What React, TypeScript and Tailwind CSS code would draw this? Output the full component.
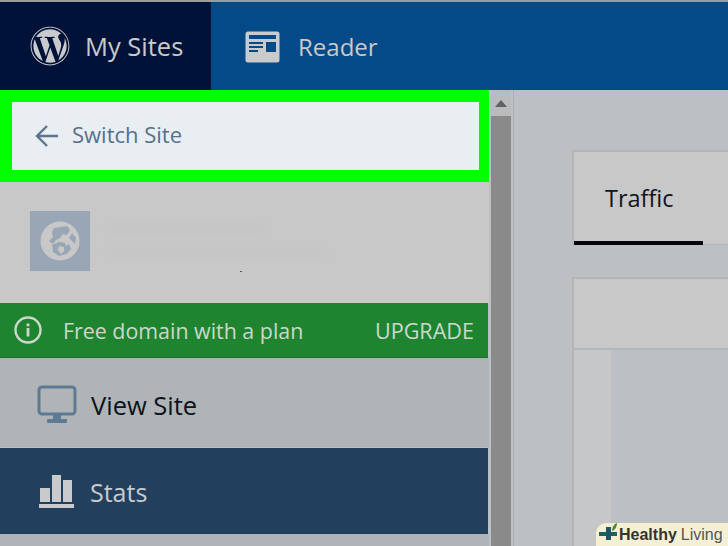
import React from "react";
import { FaWordpress } from "react-icons/fa";

const sans = "font-['Open_Sans','Noto_Sans',sans-serif]";

function ReaderIcon() {
  return (
    <svg width="36" height="33" viewBox="0 0 36 33" className="shrink-0">
      <rect x="0.5" y="0.5" width="34" height="31" rx="2.5" fill="#c9cacb" />
      <rect x="4" y="4" width="27" height="4" fill="#054a88" />
      <rect x="21" y="11" width="10" height="10" fill="#054a88" />
      <rect x="4" y="11" width="14" height="2" fill="#054a88" />
      <rect x="4" y="15" width="14" height="2" fill="#054a88" />
      <rect x="4" y="19" width="9" height="2" fill="#054a88" />
    </svg>
  );
}

function GlobeIcon() {
  return (
    <svg width="42" height="42" viewBox="0 0 42 42">
      <circle cx="21" cy="21" r="19.5" fill="#c8c8c8" />
      <path d="M15 8 28 6l3 4-3 5-4-1-3 4-4 2-3 4-4-3 4-4-1-5z" fill="#98a6b5" />
      <path d="M13 25l7-3 6 1 1 3 3-2 2 5-4 5-8 2-6-4z" fill="#98a6b5" />
      <path d="M20 26l5 1v4l-3 3-3-4z" fill="#c8c8c8" />
      <path d="M33 13l4 5-1 6-3-3-3-3z" fill="#98a6b5" />
    </svg>
  );
}

function Monitor() {
  return (
    <svg width="40" height="39" viewBox="0 0 40 39" className="shrink-0">
      <rect x="2" y="2" width="36" height="27" rx="3" fill="none" stroke="#5d7a94" strokeWidth="3" />
      <rect x="16" y="30" width="8" height="4" fill="#5d7a94" />
      <rect x="10" y="34" width="20" height="4" rx="1" fill="#5d7a94" />
    </svg>
  );
}

function StatsIcon() {
  return (
    <svg width="35" height="33" viewBox="0 0 35 33" className="shrink-0">
      <rect x="1" y="13" width="10" height="14" fill="#c9cacb" />
      <rect x="13" y="0" width="9" height="27" fill="#c9cacb" />
      <rect x="24" y="5" width="9" height="22" fill="#c9cacb" />
      <rect x="0" y="29" width="35" height="4" fill="#c9cacb" />
    </svg>
  );
}

function InfoIcon() {
  return (
    <svg width="30" height="30" viewBox="0 0 30 30" className="shrink-0">
      <circle cx="15" cy="15" r="12.5" fill="none" stroke="#cdd8cc" strokeWidth="2.4" />
      <rect x="13.6" y="13" width="2.8" height="8.5" fill="#cdd8cc" />
      <rect x="13.6" y="8.5" width="2.8" height="2.8" fill="#cdd8cc" />
    </svg>
  );
}

function BackArrow() {
  return (
    <svg width="24" height="24" viewBox="0 0 24 24" className="shrink-0">
      <path d="M23 12H2M12 2 2 12l10 10" fill="none" stroke="#5b7590" strokeWidth="2.4" />
    </svg>
  );
}

function CrossLogo() {
  return (
    <svg width="20" height="23" viewBox="0 0 20 23" className="shrink-0">
      <rect x="1" y="9" width="18" height="4" fill="#1c6068" />
      <rect x="8" y="4" width="5" height="13" fill="#1c5563" />
      <path d="M14 8c0-4 2-7 5-8 0 4-2 7-5 8z" fill="#4d8a3a" />
    </svg>
  );
}

export default function App() {
  return (
    <div className={`w-[728px] h-[546px] overflow-hidden relative flex flex-col bg-[#bcc0c2] ${sans}`}>
      <div className="h-[2px] bg-[#9b9c9c]" />

      {/* masterbar */}
      <header className="h-[88px] flex bg-[#054a88] text-[#c9cacb]">
        <div className="w-[211px] flex items-center gap-[15px] pl-[30px] bg-[#001238] text-[25.5px]">
          <FaWordpress size={40} className="shrink-0" color="#c9cacb" />
          <span>My Sites</span>
        </div>
        <div className="flex items-center gap-[17px] pl-[34px] pt-[2px] text-[24px]">
          <ReaderIcon />
          <span>Reader</span>
        </div>
      </header>

      <div className="flex-1 flex min-h-0">
        {/* sidebar */}
        <aside className="w-[489px] flex flex-col">
          <div className="h-[92px] bg-[#00ff00] p-[12px] pr-[10px]">
            <div className="h-[68px] bg-[#e9eef3] flex items-center gap-[13px] pl-[23px] text-[#56708c] text-[22px] font-medium">
              <BackArrow />
              <span className="mb-[3px]">Switch Site</span>
            </div>
          </div>

          <div className="h-[121px] bg-[#c8c8c8] flex items-center pl-[30px] relative">
            <div className="w-[60px] h-[60px] bg-[#98a6b5] flex items-center justify-center -mt-[4px]">
              <GlobeIcon />
            </div>
            {/* blurred-out site name */}
            <div className="ml-[17px] flex flex-col gap-[14px] blur-[2px] -mt-[4px]">
              <div className="w-[160px] h-[12px] bg-[#c6c6c6]" />
              <div className="w-[220px] h-[10px] bg-[#c6c6c6]" />
            </div>
            <div className="absolute left-[240px] top-[89px] w-[2px] h-[1px] bg-[#555]" />
          </div>

          <div className="h-[55px] mr-[1px] bg-[#1e8430] flex items-center pl-[13px] pr-[14px] text-[#cdd8cc] border-b border-[#17702a]">
            <InfoIcon />
            <span className="ml-[20px] text-[21.4px] pt-[3px]">Free domain with a plan</span>
            <span className="ml-auto text-[21.6px] pt-[3px]">UPGRADE</span>
          </div>

          <div className="h-[89px] bg-[#b0b4b7] flex items-center gap-[14px] pl-[37px] pt-[3px] text-[#0b1220] text-[25.5px]">
            <Monitor />
            <span className="pt-[3px]">View Site</span>
          </div>

          <div className="h-[86px] mt-[1px] mr-[1px] bg-[#233f5e] flex items-center gap-[16px] pl-[39px] text-[#c9cacb] text-[25px]">
            <StatsIcon />
            <span className="pt-[4px]">Stats</span>
          </div>

          <div className="flex-1 bg-[#b0b4b7]" />
        </aside>

        {/* scrollbar */}
        <div className="w-[24px] ml-[1px] flex flex-col pl-[1px] pr-[2px] bg-[#bcc0c2] border-r border-[#a9adb0]">
          <div className="h-[26px] flex items-center justify-center bg-[#b9bbbc]">
            <div className="w-0 h-0 border-x-[6px] border-x-transparent border-b-[7px] border-b-[#5f6163]" />
          </div>
          <div className="flex-1 bg-[#8a8a8a]" />
        </div>

        {/* main content */}
        <main className="flex-1 flex flex-col pl-[58px] pt-[60px] min-w-0">
          <div className="h-[95px] flex bg-[#c8c8c9] border-t-2 border-l-2 border-[#b2b6b9]">
            <div className="w-[129px] h-full flex flex-col">
              <div className="flex-1 flex items-center pl-[31px] pt-[4px] text-[#10141f] text-[23.5px]">Traffic</div>
              <div className="h-[4px] bg-[#05070f]" />
            </div>
            <div className="flex-1 flex flex-col justify-end">
              <div className="h-[1px] bg-[#b2b6b9]" />
            </div>
          </div>

          <div className="mt-[32px] flex-1 flex flex-col border-t-2 border-l-2 border-[#b2b6b9]">
            <div className="h-[71px] bg-[#c8c8c9] border-b-2 border-[#b2b6b9]" />
            <div className="flex-1 flex bg-[#bcbfc3]">
              <div className="w-[37px] bg-[#c6c7c8]" />
            </div>
          </div>
        </main>
      </div>

      {/* watermark */}
      <div className="absolute left-[596px] right-0 bottom-0 h-[23px] pl-[2px] flex items-center bg-[#f5efd3] rounded-tl-[10px] text-[16px] text-[#333] whitespace-nowrap font-['Liberation_Sans',sans-serif] overflow-hidden">
        <CrossLogo />
        <span className="font-bold ml-[1px]">Healthy</span>
        <span className="ml-[4px] text-[#555]">Living</span>
      </div>
    </div>
  );
}
